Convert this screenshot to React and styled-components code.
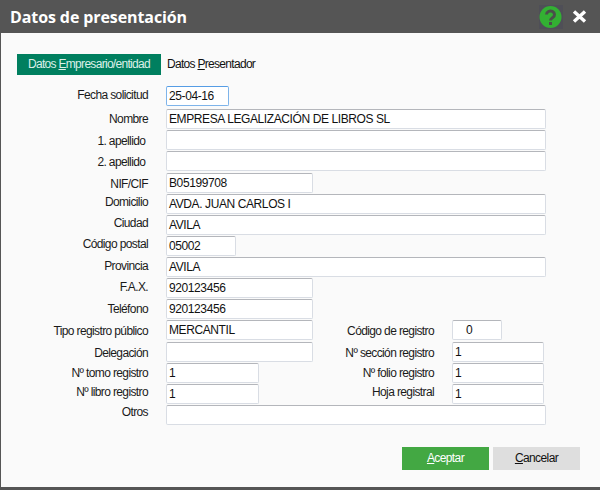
import React from "react";
import styled, { createGlobalStyle } from "styled-components";

const GlobalStyle = createGlobalStyle`
  html, body {
    margin: 0;
    padding: 0;
    background: #ffffff;
  }
  body {
    font-family: "Liberation Sans", Arial, sans-serif;
  }
`;

const Win = styled.div`
  width: 600px;
  height: 490px;
  box-sizing: border-box;
  display: flex;
  flex-direction: column;
  background: #fafafa;
  border-left: 1px solid #555555;
  border-bottom: 3px solid #555555;
  overflow: hidden;
`;

const TitleBar = styled.div`
  height: 33px;
  flex: none;
  margin-left: -1px;
  padding: 0 13px 0 10px;
  display: flex;
  align-items: center;
  background: #555555;
`;

const Title = styled.div`
  flex: 1;
  color: #ffffff;
  font-family: "Open Sans", sans-serif;
  font-weight: 700;
  font-size: 16px;
  letter-spacing: -0.1px;
`;

const HelpSvg = styled.svg`
  width: 24px;
  height: 24px;
  margin-right: 9px;
`;

const CloseSvg = styled.svg`
  width: 15px;
  height: 13px;
`;

const Tabs = styled.div`
  margin: 21px 0 0 16px;
  display: flex;
  align-items: center;
  height: 21px;
  gap: 6px;
  font-size: 12px;
  letter-spacing: -0.7px;
`;

const Tab = styled.div`
  width: ${(p) => (p.$active ? "144px" : "auto")};
  height: 21px;
  line-height: 21px;
  text-align: center;
  color: ${(p) => (p.$active ? "#dcefe8" : "#111111")};
  background: ${(p) => (p.$active ? "#007f5f" : "transparent")};
`;

const Form = styled.div`
  margin-top: 11px;
  display: flex;
  flex-direction: column;
`;

const Row = styled.div`
  display: flex;
  height: ${(p) => p.$h || 21}px;
`;

const Label = styled.div`
  width: ${(p) => p.$w}px;
  margin-top: ${(p) => p.$top ?? 2}px;
  margin-right: 18px;
  text-align: right;
  font-size: 12px;
  letter-spacing: -0.62px;
  line-height: 14px;
  color: #1a1a1a;
  white-space: pre;
`;

const Field = styled.div`
  width: ${(p) => p.$w}px;
  height: 20px;
  box-sizing: border-box;
  padding: 1px 0 0 ${(p) => p.$pad ?? 2}px;
  background: #ffffff;
  border: 1px solid ${(p) => (p.$focus ? "#7eb4ea" : "#d9dde4")};
  border-top-color: ${(p) => (p.$focus ? "#569de5" : "#b4b6bb")};
  border-radius: 2px;
  font-size: 12px;
  letter-spacing: -0.4px;
  line-height: 16px;
  color: #111111;
`;

const Footer = styled.div`
  margin: 21px 0 0 401px;
  display: flex;
  gap: 4px;
`;

const Button = styled.div`
  width: 87px;
  height: 23px;
  line-height: 23px;
  text-align: center;
  font-size: 12px;
  letter-spacing: -0.6px;
  color: ${(p) => (p.$primary ? "#ffffff" : "#111111")};
  background: ${(p) => (p.$primary ? "#43a843" : "#dedede")};
`;

const rows = [
  { h: 23, label: "Fecha solicitud", top: 2, w: 63, value: "25-04-16", focus: true },
  { h: 21, label: "Nombre", top: 3, w: 380, value: "EMPRESA LEGALIZACIÓN DE LIBROS SL" },
  { h: 21, label: "1. apellido ", top: 4, w: 380, value: "" },
  { h: 22, label: "2. apellido ", top: 4, w: 380, value: "" },
  { h: 21, label: "NIF/CIF", top: 4, w: 147, value: "B05199708" },
  { h: 21, label: "Domicilio", top: 1, w: 380, value: "AVDA. JUAN CARLOS I" },
  { h: 21, label: "Ciudad", top: 1, w: 380, value: "AVILA" },
  { h: 21, label: "Código postal", top: 1, w: 70, value: "05002" },
  { h: 21, label: "Provincia", top: 2, w: 380, value: "AVILA" },
  { h: 21, label: "F.A.X.", top: 2, w: 147, value: "920123456" },
  { h: 21, label: "Teléfono", top: 3, w: 147, value: "920123456" },
  {
    h: 22, label: "Tipo registro público", top: 4, w: 147, value: "MERCANTIL",
    label2: "Código de registro", top2: 4, w2: 50, value2: "0", pad2: 13,
  },
  {
    h: 21, label: "Delegación", top: 4, w: 147, value: "",
    label2: "Nº sección registro", top2: 4, w2: 92, value2: "1",
  },
  {
    h: 21, label: "Nº tomo registro", top: 3, w: 93, value: "1",
    label2: "Nº folio registro", top2: 3, w2: 92, value2: "1",
  },
  {
    h: 21, label: "Nº libro registro", top: 1, w: 93, value: "1",
    label2: "Hoja registral", top2: 1, w2: 92, value2: "1",
  },
  { h: 21, label: "Otros", top: 0, w: 380, value: "" },
];

export default function App() {
  return (
    <>
      <GlobalStyle />
      <Win>
        <TitleBar>
          <Title>Datos de presentación</Title>
          <HelpSvg viewBox="0 0 24 24">
            <rect width="24" height="24" fill="#4f4f57" />
            <circle cx="11.5" cy="12" r="11" fill="#33b033" />
            <path
              d="M7.5 9.5a4 3.6 0 1 1 6.3 3c-1.5 1-2.3 1.4-2.3 3"
              fill="none"
              stroke="#4a4f4a"
              strokeWidth="3"
            />
            <rect x="10" y="17" width="3" height="3" fill="#4a4f4a" />
          </HelpSvg>
          <CloseSvg viewBox="0 0 15 13">
            <path d="M2 1.5L13 11.5M13 1.5L2 11.5" stroke="#ffffff" strokeWidth="3.4" />
          </CloseSvg>
        </TitleBar>
        <Tabs>
          <Tab $active>
            Datos <u>E</u>mpresario/entidad
          </Tab>
          <Tab>
            Datos <u>P</u>resentador
          </Tab>
        </Tabs>
        <Form>
          {rows.map((r) => (
            <Row key={r.label} $h={r.h}>
              <Label $w={147} $top={r.top}>{r.label}</Label>
              <Field $w={r.w} $focus={r.focus}>{r.value}</Field>
              {r.label2 && (
                <>
                  <Label $w={268 - r.w} $top={r.top2}>{r.label2}</Label>
                  <Field $w={r.w2} $pad={r.pad2}>{r.value2}</Field>
                </>
              )}
            </Row>
          ))}
        </Form>
        <Footer>
          <Button $primary>
            <u>A</u>ceptar
          </Button>
          <Button>
            <u>C</u>ancelar
          </Button>
        </Footer>
      </Win>
    </>
  );
}
